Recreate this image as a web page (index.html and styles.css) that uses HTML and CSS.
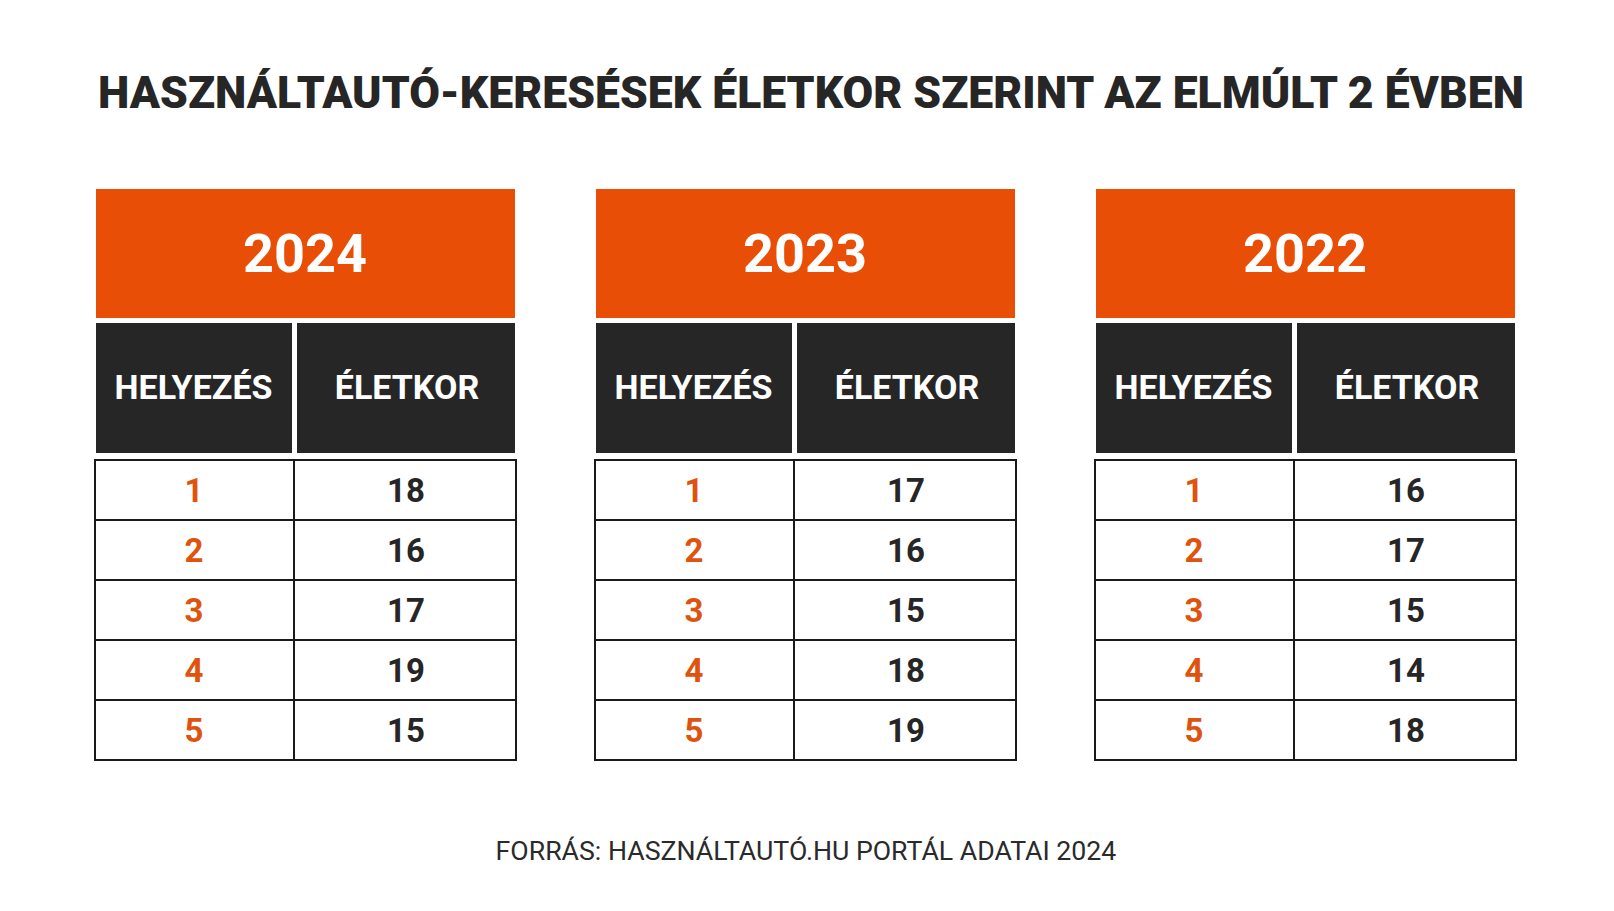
FILE: index.html
```html
<!DOCTYPE html>
<html lang="hu">
<head>
<meta charset="utf-8">
<title>Használtautó-keresések életkor szerint</title>
<link rel="stylesheet" href="styles.css">
</head>
<body>
<main class="page">
  <h1 class="title">HASZNÁLTAUTÓ-KERESÉSEK ÉLETKOR SZERINT AZ ELMÚLT 2 ÉVBEN</h1>
  <section class="tables">
    <div class="table">
      <div class="year">2024</div>
      <div class="head"><div class="hcell hcell-rank">HELYEZÉS</div><div class="hcell hcell-age">ÉLETKOR</div></div>
      <div class="body">
        <div class="row"><div class="cell rank">1</div><div class="cell age">18</div></div>
        <div class="row"><div class="cell rank">2</div><div class="cell age">16</div></div>
        <div class="row"><div class="cell rank">3</div><div class="cell age">17</div></div>
        <div class="row"><div class="cell rank">4</div><div class="cell age">19</div></div>
        <div class="row"><div class="cell rank">5</div><div class="cell age">15</div></div>
      </div>
    </div>
    <div class="table">
      <div class="year">2023</div>
      <div class="head"><div class="hcell hcell-rank">HELYEZÉS</div><div class="hcell hcell-age">ÉLETKOR</div></div>
      <div class="body">
        <div class="row"><div class="cell rank">1</div><div class="cell age">17</div></div>
        <div class="row"><div class="cell rank">2</div><div class="cell age">16</div></div>
        <div class="row"><div class="cell rank">3</div><div class="cell age">15</div></div>
        <div class="row"><div class="cell rank">4</div><div class="cell age">18</div></div>
        <div class="row"><div class="cell rank">5</div><div class="cell age">19</div></div>
      </div>
    </div>
    <div class="table">
      <div class="year">2022</div>
      <div class="head"><div class="hcell hcell-rank">HELYEZÉS</div><div class="hcell hcell-age">ÉLETKOR</div></div>
      <div class="body">
        <div class="row"><div class="cell rank">1</div><div class="cell age">16</div></div>
        <div class="row"><div class="cell rank">2</div><div class="cell age">17</div></div>
        <div class="row"><div class="cell rank">3</div><div class="cell age">15</div></div>
        <div class="row"><div class="cell rank">4</div><div class="cell age">14</div></div>
        <div class="row"><div class="cell rank">5</div><div class="cell age">18</div></div>
      </div>
    </div>
  </section>
  <p class="source">FORRÁS: HASZNÁLTAUTÓ.HU PORTÁL ADATAI 2024</p>
</main>
</body>
</html>
```

FILE: styles.css
```css
* { box-sizing: border-box; }
html, body { margin: 0; padding: 0; background: #ffffff; }
body {
  width: 1614px;
  height: 911px;
  overflow: hidden;
  font-family: Roboto, "Liberation Sans", Arial, sans-serif;
  color: #262626;
}
.page {
  display: flex;
  flex-direction: column;
  align-items: center;
  padding-top: 71px;
}
.title {
  margin: 0;
  padding-left: 8px;
  font-size: 44.5px;
  line-height: 44px;
  font-weight: 900;
  color: #262626;
  text-align: center;
  white-space: nowrap;
}
.tables {
  display: flex;
  gap: 81px;
  margin: 74px 4px 0 0;
}
.table {
  width: 419px;
  display: flex;
  flex-direction: column;
}
.year {
  height: 129px;
  background: #e94e06;
  color: #ffffff;
  font-size: 54px;
  font-weight: 700;
  display: flex;
  align-items: center;
  justify-content: center;
}
.head {
  margin-top: 5px;
  height: 130px;
  display: grid;
  grid-template-columns: 196px 218px;
  gap: 5px;
}
.hcell {
  background: #262626;
  color: #ffffff;
  font-size: 34px;
  font-weight: 700;
  display: flex;
  align-items: center;
  justify-content: center;
  padding-bottom: 2px;
}
.hcell-age { padding-left: 3px; }
.body {
  margin: 6px -2px 0;
  border: 2px solid #1a1a1a;
  display: flex;
  flex-direction: column;
}
.row {
  height: 58px;
  display: grid;
  grid-template-columns: 199px 1fr;
}
.row + .row { border-top: 2px solid #1a1a1a; height: 60px; }
.cell {
  display: flex;
  align-items: center;
  justify-content: center;
  font-size: 33px;
  font-weight: 700;
}
.rank {
  color: #e0530f;
  border-right: 2px solid #1a1a1a;
}
.age { color: #262626; padding-left: 3px; }
.source {
  margin: 77px 2px 0 0;
  font-size: 26.7px;
  line-height: 26px;
  font-weight: 400;
  color: #2a2a2a;
}
```
